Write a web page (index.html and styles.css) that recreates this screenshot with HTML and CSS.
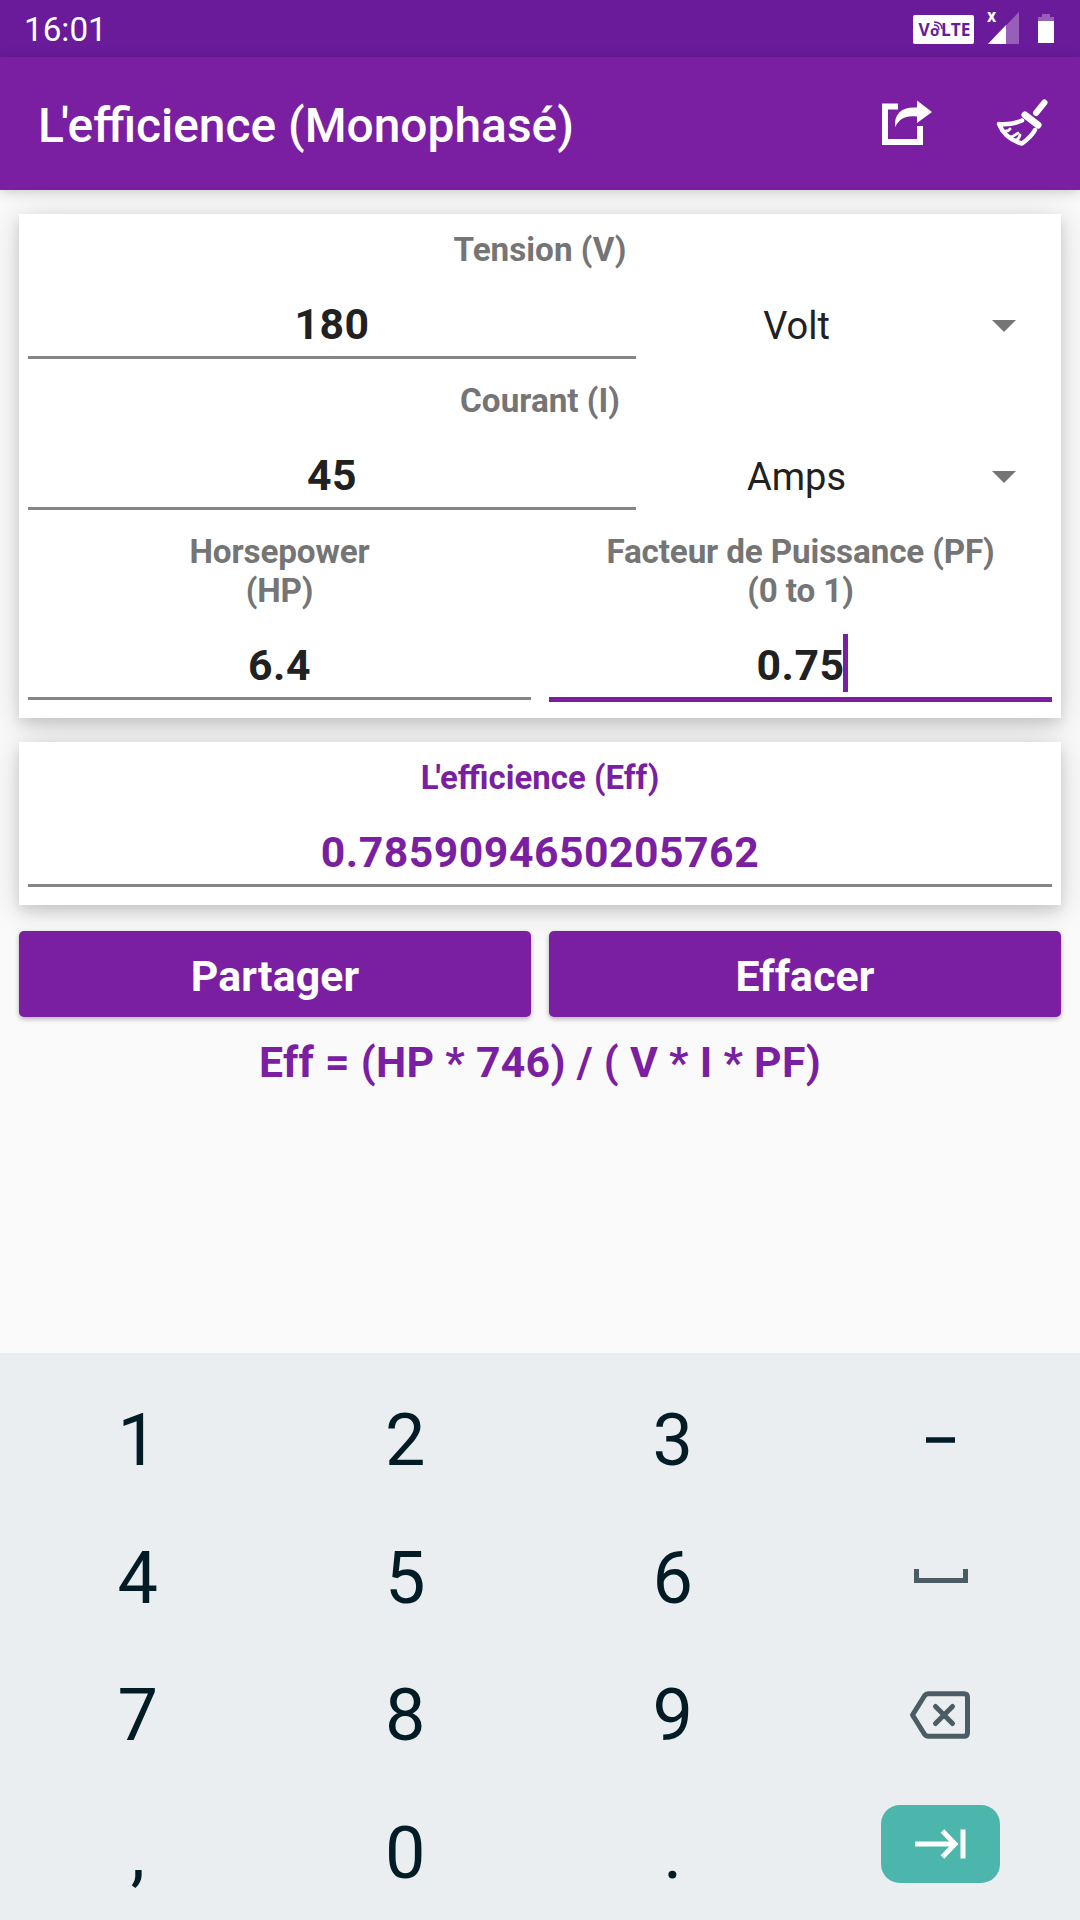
FILE: index.html
```html
<!DOCTYPE html>
<html lang="fr">
<head>
<meta charset="utf-8">
<title>L'efficience (Monophasé)</title>
<link rel="stylesheet" href="styles.css">
</head>
<body>
<div class="statusbar">
  <span class="clock">16:01</span>
  <svg class="status-icons" width="150" height="57" viewBox="0 0 150 57">
    <rect x="3" y="15" width="61" height="29" rx="2" fill="#fff"/>
    <text x="8.500" y="36" class="volte">V</text>
    <text x="20" y="36" class="volte small">o</text>
    <text x="31" y="36" class="volte">LTE</text>
    <path d="M24 25q5 0 5 5M24 22q8 0 8 7" fill="none" stroke="#6a1b9a" stroke-width="1.300"/>
    <text x="77" y="22" class="nosim">x</text>
    <path d="M109 12v32H78z" fill="#fff" opacity=".3"/>
    <path d="M96 25v19H78z" fill="#fff"/>
    <path d="M132 14h8v3h4v4h-16v-4h4z" fill="#fff" opacity=".3"/>
    <path d="M128 21h16v22h-16z" fill="#fff"/>
  </svg>
</div>
<div class="toolbar">
  <h1><span class="kern">L</span>'efficience (Monophasé)</h1>
  <svg width="200" height="70" viewBox="0 -11 200 70">
    <path d="M18 6.500H5v35.500h35V26" fill="none" stroke="#fff" stroke-width="6"/>
    <path d="M15 27C14 13 22 6.500 37 7.500V0.500L52 12L37 23V16.500C26 15 20 18 15 27z" fill="#fff"/>
    <g fill="none" stroke="#fff" stroke-linecap="round" stroke-linejoin="round">
      <path d="M164.500 2.500L156 13" stroke-width="6"/>
      <path d="M145 15L158 25" stroke-width="7"/>
      <path d="M142 20.500Q132 25 119 24Q125 39 142 43.500Q151 37 155 30" stroke-width="4.500"/>
      <path d="M122 31Q128 32 130 29M129 37Q133 37 138 33M135 41Q139 39 140 35" stroke-width="2.800"/>
    </g>
  </svg>
</div>

<div class="content">
  <div class="card">
    <div class="label">Tension (V)</div>
    <div class="row">
      <div class="field wide">180</div>
      <div class="spinner"><span>Volt</span><i class="caret"></i></div>
    </div>
    <div class="label">Courant (I)</div>
    <div class="row">
      <div class="field wide">45</div>
      <div class="spinner"><span>Amps</span><i class="caret"></i></div>
    </div>
    <div class="row halves">
      <div class="col">
        <div class="label">Horsepower<br>(HP)</div>
        <div class="field">6.4</div>
      </div>
      <div class="col">
        <div class="label">Facteur de Puissance (PF)<br>(0 to 1)</div>
        <div class="field focused"><span class="typed">0.75</span></div>
      </div>
    </div>
  </div>

  <div class="card">
    <div class="label result"><span class="kern">L</span>'efficience (Eff)</div>
    <div class="field result">0.7859094650205762</div>
  </div>

  <div class="row halves buttons">
    <div class="btn">Partager</div>
    <div class="btn">Effacer</div>
  </div>
  <div class="formula">Eff = (HP * 746) / ( V * I * PF)</div>
</div>

<div class="keyboard">
  <div class="key">1</div>
  <div class="key">2</div>
  <div class="key">3</div>
  <div class="key"><svg width="60" height="20" viewBox="0 0 60 20"><path d="M16 10h29" stroke="#021c26" stroke-width="5.500"/></svg></div>
  <div class="key">4</div>
  <div class="key">5</div>
  <div class="key">6</div>
  <div class="key"><svg width="60" height="20" viewBox="0 0 60 20"><path d="M6.500 2v11.500h49V2" fill="none" stroke="#4b5c64" stroke-width="5"/></svg></div>
  <div class="key">7</div>
  <div class="key">8</div>
  <div class="key">9</div>
  <div class="key"><svg width="64" height="50" viewBox="0 0 64 50"><g fill="none" stroke="#4b5c64" stroke-width="5" stroke-linejoin="round" stroke-linecap="round"><path d="M20 3.700H56q3.500 0 3.500 3.500V42.800q0 3.500-3.500 3.500H20q-2 0-3.500-2L4.500 25L16.500 5.700q1.500-2 3.500-2z"/><path d="M27.500 16.500l17 17M44.500 16.500l-17 17"/></g></svg></div>
  <div class="key">,</div>
  <div class="key">0</div>
  <div class="key">.</div>
  <div class="key"><div class="next"><svg width="119" height="78" viewBox="0 0 119 78"><path d="M34 39h40M61.500 26L74 39L61.500 52M82 24.500v29" fill="none" stroke="#fff" stroke-width="5"/></svg></div></div>
</div>
</body>
</html>
```
FILE: styles.css
```css
* {box-sizing:border-box;}
body {margin:0;width:1080px;height:1920px;overflow:hidden;display:flex;flex-direction:column;
  font-family:Roboto,sans-serif;background:#fafafa;color:#212121;}

.statusbar {height:57px;flex:none;background:#6a1b9a;color:#fff;display:flex;align-items:center;
  justify-content:space-between;padding:0 20px 0 24px;}
.clock {font-size:33.25px;line-height:39px;padding-top:2px;}
.volte {font:bold 17.3px "Open Sans",sans-serif;fill:#6a1b9a;}
.small {font-size:15px;}
.nosim {font:bold 18px Roboto,sans-serif;fill:#fff;}

.toolbar {height:133px;flex:none;background:#7b1fa2;color:#fff;display:flex;align-items:center;
  justify-content:space-between;padding:0 0 0 38px;box-shadow:0 2px 12px rgba(0,0,0,.2);}
.toolbar h1 {margin:0;padding-top:4px;font-size:47.9px;font-weight:500;line-height:56px;}
.kern {letter-spacing:-3px;}

.content {flex:1;padding:24px 19px 0;}
.card {background:#fff;padding:16px 9px 18px;margin-bottom:24px;
  box-shadow:0 6px 12px rgba(0,0,0,.12),0 4px 34px rgba(0,0,0,.15);}
.label {font-size:33.25px;line-height:39px;font-weight:bold;color:#757575;text-align:center;margin-bottom:30px;}
.row {display:flex;}
.row + .label, .row + .row {margin-top:22px;}
.halves {gap:18px;}
.col {flex:1;}
.col .label {letter-spacing:-.15px;}
.field {height:60px;border-bottom:3px solid #858585;font-size:42.75px;line-height:50px;
  font-weight:bold;text-align:center;letter-spacing:.5px;}
.wide {width:608px;}
.focused {height:62px;border-bottom:5px solid #7b1fa2;margin-bottom:-2px;}
.typed {position:relative;}
.typed::after {content:"";position:absolute;right:-4px;top:-6px;width:5px;height:58px;background:#7b1fa2;}
.label.result {font-size:33px;}
.result {color:#7b1fa2;}
.spinner {flex:1;display:flex;align-items:center;padding:0 36px 6px 9px;font-size:38px;line-height:44px;}
.spinner span {flex:1;text-align:center;padding-right:44px;}
.caret {border:12px solid transparent;border-top-color:#757575;border-bottom:0;}
.buttons {margin-top:26px;}
.btn {flex:1;height:86px;line-height:90px;background:#7b1fa2;color:#fff;border-radius:5px;
  font-size:42.75px;font-weight:bold;text-align:center;letter-spacing:.15px;
  box-shadow:0 2px 5px rgba(0,0,0,.3);}
.formula {margin-top:20px;font-size:42.75px;line-height:50px;font-weight:bold;letter-spacing:.3px;
  color:#7b1fa2;text-align:center;}

.keyboard {height:567px;flex:none;background:#ebeef1;padding:18px 6px 0 4px;display:grid;
  grid-template-columns:repeat(4,1fr);grid-auto-rows:137.6px;color:#021c26;font-size:72px;}
.key {display:flex;align-items:center;justify-content:center;padding-top:2px;}
.key > svg {margin-top:-2px;}
.next {width:119px;height:78px;border-radius:19px;background:#4db6ac;margin-bottom:19px;}
```
